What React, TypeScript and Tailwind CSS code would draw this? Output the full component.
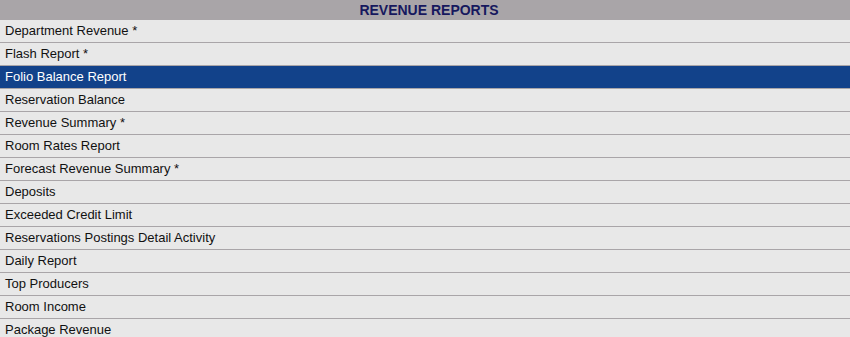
import React from "react";

const items = [
  "Department Revenue *",
  "Flash Report *",
  "Folio Balance Report",
  "Reservation Balance",
  "Revenue Summary *",
  "Room Rates Report",
  "Forecast Revenue Summary *",
  "Deposits",
  "Exceeded Credit Limit",
  "Reservations Postings Detail Activity",
  "Daily Report",
  "Top Producers",
  "Room Income",
  "Package Revenue",
];

export default function App() {
  return (
    <div className="w-[850px] h-[337px] overflow-hidden bg-[#e8e8e8] font-['Liberation_Sans',Arial,sans-serif]">
      <div className="h-[20px] bg-[#a9a5a8] flex items-center justify-center pl-[8px] text-[14px] font-bold text-[#16185e] leading-none">
        REVENUE REPORTS
      </div>
      {items.map((t, i) => (
        <div
          key={t}
          className={
            i === 2
              ? "h-[23px] flex items-center pl-[5px] text-[13px] text-white bg-[#12428a] border-b border-[#a9a5a8]"
              : "h-[23px] flex items-center pl-[5px] text-[13px] text-[#111] bg-[#e8e8e8] border-b border-[#a9a5a8]"
          }
        >
          {t}
        </div>
      ))}
    </div>
  );
}
